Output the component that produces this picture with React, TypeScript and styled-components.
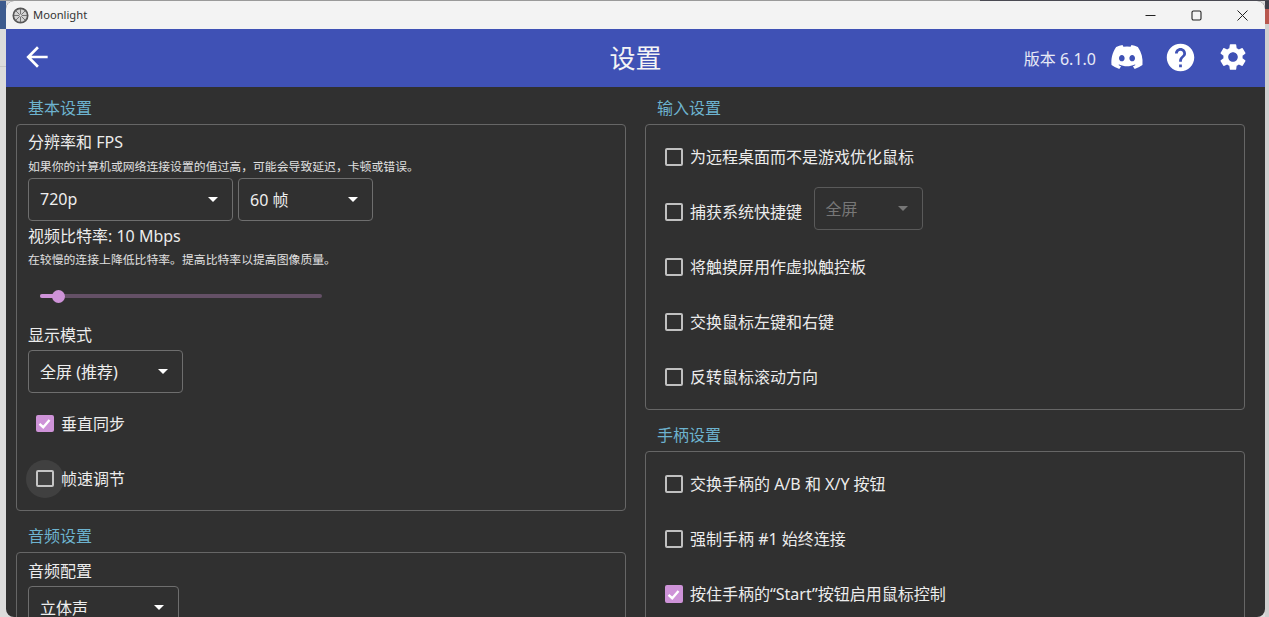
import React from "react";
import styled, { createGlobalStyle } from "styled-components";
import { MdArrowBack, MdHelp, MdSettings } from "react-icons/md";
import { FaDiscord } from "react-icons/fa";

const Global = createGlobalStyle`
  html, body { margin: 0; padding: 0; width: 100%; height: 617px; overflow: hidden; background: #dcdcdc; }
  #root { height: 617px; }
`;

const FONT = `"Noto Sans", "Noto Sans CJK SC", sans-serif`;

const Desktop = styled.div`
  width: 1269px;
  height: 617px;
  box-sizing: border-box;
  padding: 1px 4px 0 6px;
  overflow: hidden;
  font-family: ${FONT};
  background:
    linear-gradient(#4a4a52, #4a4a52) 980px 0 / 289px 1px no-repeat,
    linear-gradient(#9a9a9a, #9a9a9a) 0 0 / 980px 1px no-repeat,
    linear-gradient(#3f3f48 0, #3f3f48 9px, #b8574e 9px, #b8574e 24px, #cfcfcf 24px) 1265px 0 / 4px 100% no-repeat,
    linear-gradient(#3d5b8e 0, #3d5b8e 29px, #dcdcdc 29px, #dcdcdc 66px, #c8c8c8 66px, #c8c8c8 67px, #dcdcdc 67px) 0 0 / 6px 100% no-repeat,
    #dcdcdc;
`;

const Window = styled.div`
  height: 616px;
  border-radius: 8px;
  overflow: hidden;
  display: flex;
  flex-direction: column;
  background: #303030;
`;

const TitleBar = styled.div`
  height: 28px;
  flex: none;
  background: #f3f3f3;
  display: flex;
  align-items: center;
  padding-left: 6px;
  color: #333;
  font-size: 11.2px;
`;

const TitleText = styled.span`
  margin-left: 4px;
  flex: 1;
  padding-bottom: 2px;
`;

const WinButton = styled.div`
  width: 46px;
  height: 28px;
  display: flex;
  align-items: center;
  justify-content: center;
  color: #222;
`;

const AppBar = styled.header`
  height: 58px;
  flex: none;
  background: #3f51b5;
  display: grid;
  grid-template-columns: 1fr auto 1fr;
  align-items: center;
  color: #fff;
  padding: 0 15px 0 15px;
`;

const BackArea = styled.div`
  display: flex;
  align-items: center;
  padding-bottom: 2px;
`;

const AppTitle = styled.h1`
  margin: 0;
  font-size: 26px;
  font-weight: 400;
  line-height: 58px;
  color: #f4f4f4;
`;

const AppActions = styled.div`
  display: flex;
  align-items: center;
  justify-content: flex-end;
  gap: 19px;
`;

const Version = styled.span`
  font-size: 16px;
  color: #e8eaf6;
  margin-right: -5px;
`;

const ActionIcon = styled.span`
  display: flex;
  width: 34px;
  justify-content: center;
  align-items: center;
  padding-bottom: 2px;
`;

const Content = styled.main`
  flex: 1;
  display: grid;
  grid-template-columns: 610px 600px;
  column-gap: 19px;
  padding: 0 20px 0 10px;
  align-items: start;
`;

const Column = styled.div`
  display: flex;
  flex-direction: column;
`;

const SectionTitle = styled.h2`
  margin: 0;
  height: 37px;
  box-sizing: border-box;
  padding: 9px 0 0 12px;
  font-size: 16px;
  line-height: 24px;
  font-weight: 400;
  color: #6db3cf;
`;

const Panel = styled.section<{ $h?: number }>`
  box-sizing: border-box;
  border: 1px solid #666;
  border-radius: 4px;
  ${(p) => (p.$h ? `height: ${p.$h}px;` : "")}
  padding: 0 11px;
  margin-bottom: 4px;
`;

const CheckPanel = styled(Panel)`
  padding: 4.5px 19px 0;
`;

const Label = styled.div`
  font-size: 16px;
  line-height: 24px;
  color: #ececec;
`;

const Hint = styled.div`
  font-size: 11.85px;
  line-height: 16px;
  color: #e0e0e0;
`;

const SelectRow = styled.div`
  display: flex;
  gap: 5px;
`;

const SelectBox = styled.div<{ $w: number; $disabled?: boolean }>`
  box-sizing: border-box;
  width: ${(p) => p.$w}px;
  height: 43px;
  border: 1px solid ${(p) => (p.$disabled ? "#5a5a5a" : "#6e6e6e")};
  border-radius: 4px;
  display: flex;
  align-items: center;
  justify-content: space-between;
  padding: 0 14px 0 11px;
  font-size: 16px;
  color: ${(p) => (p.$disabled ? "#777" : "#eee")};
`;

const SelectValue = styled.span`
  padding-bottom: 2px;
`;

const Caret = styled.span<{ $disabled?: boolean }>`
  width: 0;
  height: 0;
  border-left: 5px solid transparent;
  border-right: 5px solid transparent;
  border-top: 5px solid ${(p) => (p.$disabled ? "#777" : "#fff")};
`;

const SelectSlot = styled.span`
  margin: 0 0 7px 4px;
`;

const SliderWrap = styled.div`
  position: relative;
  width: 282px;
  height: 4px;
  margin: 0 0 0 12px;
  border-radius: 2px;
  background: #645066;
`;

const SliderFill = styled.div`
  position: absolute;
  left: 0;
  top: 0;
  height: 4px;
  border-radius: 2px;
  background: #ce93d8;
`;

const SliderThumb = styled.div`
  position: absolute;
  top: -4.5px;
  width: 13px;
  height: 13px;
  margin-left: -6.5px;
  border-radius: 50%;
  background: #ce93d8;
`;

const CheckRow = styled.label<{ $indent?: number }>`
  height: 55px;
  display: flex;
  align-items: center;
  gap: 7.5px;
  font-size: 16px;
  color: #ececec;
  padding-left: ${(p) => p.$indent ?? 0}px;
`;

const RowText = styled.span`
  padding-bottom: 2px;
`;

const Box = styled.span<{ $checked?: boolean; $halo?: boolean }>`
  position: relative;
  flex: none;
  box-sizing: border-box;
  width: 17.5px;
  height: 17.5px;
  border-radius: 2px;
  border: 2px solid ${(p) => (p.$checked ? "#ce93d8" : "#c0c0c0")};
  background: ${(p) => (p.$checked ? "#ce93d8" : "transparent")};
  display: flex;
  align-items: center;
  justify-content: center;
  ${(p) =>
    p.$halo
      ? `&::before { content: ""; position: absolute; left: -12.25px; top: -12.25px; width: 38px; height: 38px; border-radius: 50%; background: rgba(255,255,255,0.08); }`
      : ""}
`;

const LeftTop = styled.div`
  padding-top: 5px;
`;

const Spacer = styled.div<{ $h: number }>`
  height: ${(p) => p.$h}px;
`;

const Checkbox = ({ checked, halo }: { checked?: boolean; halo?: boolean }) => (
  <Box $checked={checked} $halo={halo}>
    {checked && (
      <svg width="15" height="15" viewBox="0 0 24 24" style={{ flex: "none" }}>
        <path d="M4 12.5 L10 18 L20 6.5" fill="none" stroke="#fff" strokeWidth="3.8" />
      </svg>
    )}
  </Box>
);

const Logo = () => (
  <svg width="17" height="17" viewBox="0 0 17 17" style={{ flex: "none" }}>
    <circle cx="8.5" cy="8.5" r="7.2" fill="#d4d4d4" stroke="#565656" strokeWidth="1.7" />
    <g stroke="#6a6a6a" strokeWidth="0.9">
      <path d="M8.5 2V15M2 8.5H15M3.9 3.9L13.1 13.1M13.1 3.9L3.9 13.1" />
    </g>
    <circle cx="8.5" cy="8.5" r="1.2" fill="#e4e4e4" />
  </svg>
);

const Select = ({ w, children, disabled }: { w: number; children: React.ReactNode; disabled?: boolean }) => (
  <SelectBox $w={w} $disabled={disabled}>
    <SelectValue>{children}</SelectValue>
    <Caret $disabled={disabled} />
  </SelectBox>
);

const Check = ({ checked, halo, indent, children }: { checked?: boolean; halo?: boolean; indent?: number; children: React.ReactNode }) => (
  <CheckRow $indent={indent}>
    <Checkbox checked={checked} halo={halo} />
    <RowText>{children}</RowText>
  </CheckRow>
);

export default function App() {
  return (
    <Desktop>
      <Global />
      <Window>
        <TitleBar>
          <Logo />
          <TitleText>Moonlight</TitleText>
          <WinButton>
            <svg width="11" height="11" viewBox="0 0 11 11">
              <path d="M0.5 5.5H10.5" stroke="#222" strokeWidth="1" />
            </svg>
          </WinButton>
          <WinButton>
            <svg width="11" height="11" viewBox="0 0 11 11">
              <rect x="1" y="1" width="9" height="9" rx="1.4" fill="none" stroke="#222" strokeWidth="1.1" />
            </svg>
          </WinButton>
          <WinButton>
            <svg width="11" height="11" viewBox="0 0 11 11">
              <path d="M0.5 0.5L10.5 10.5M10.5 0.5L0.5 10.5" stroke="#222" strokeWidth="1" />
            </svg>
          </WinButton>
        </TitleBar>
        <AppBar>
          <BackArea>
            <MdArrowBack size={32} />
          </BackArea>
          <AppTitle>设置</AppTitle>
          <AppActions>
            <Version>版本 6.1.0</Version>
            <ActionIcon>
              <FaDiscord size={34} />
            </ActionIcon>
            <ActionIcon>
              <MdHelp size={33} />
            </ActionIcon>
            <ActionIcon>
              <MdSettings size={32} />
            </ActionIcon>
          </AppActions>
        </AppBar>
        <Content>
          <Column>
            <SectionTitle>基本设置</SectionTitle>
            <Panel $h={387}>
              <LeftTop>
                <Label>分辨率和 FPS</Label>
                <Spacer $h={4} />
                <Hint>如果你的计算机或网络连接设置的值过高，可能会导致延迟，卡顿或错误。</Hint>
                <Spacer $h={4} />
                <SelectRow>
                  <Select w={205}>720p</Select>
                  <Select w={135}>60 帧</Select>
                </SelectRow>
                <Spacer $h={3} />
                <Label>视频比特率: 10 Mbps</Label>
                <Spacer $h={3} />
                <Hint>在较慢的连接上降低比特率。提高比特率以提高图像质量。</Hint>
                <Spacer $h={27} />
                <SliderWrap>
                  <SliderFill style={{ width: 18 }} />
                  <SliderThumb style={{ left: 18 }} />
                </SliderWrap>
                <Spacer $h={25} />
                <Label>显示模式</Label>
                <Spacer $h={3} />
                <Select w={155}>全屏 (推荐)</Select>
                <Spacer $h={3} />
                <Check indent={8} checked>垂直同步</Check>
                <Check indent={8} halo>帧速调节</Check>
              </LeftTop>
            </Panel>
            <SectionTitle>音频设置</SectionTitle>
            <Panel $h={100}>
              <Spacer $h={6} />
              <Label>音频配置</Label>
              <Spacer $h={3} />
              <Select w={151}>立体声</Select>
            </Panel>
          </Column>
          <Column>
            <SectionTitle>输入设置</SectionTitle>
            <CheckPanel $h={286}>
              <Check>为远程桌面而不是游戏优化鼠标</Check>
              <CheckRow>
                <Checkbox />
                <RowText>捕获系统快捷键</RowText>
                <SelectSlot>
                  <Select w={109} disabled>
                    全屏
                  </Select>
                </SelectSlot>
              </CheckRow>
              <Check>将触摸屏用作虚拟触控板</Check>
              <Check>交换鼠标左键和右键</Check>
              <Check>反转鼠标滚动方向</Check>
            </CheckPanel>
            <SectionTitle>手柄设置</SectionTitle>
            <CheckPanel $h={220}>
              <Check>交换手柄的 A/B 和 X/Y 按钮</Check>
              <Check>强制手柄 #1 始终连接</Check>
              <Check checked>按住手柄的“Start”按钮启用鼠标控制</Check>
            </CheckPanel>
          </Column>
        </Content>
      </Window>
    </Desktop>
  );
}
